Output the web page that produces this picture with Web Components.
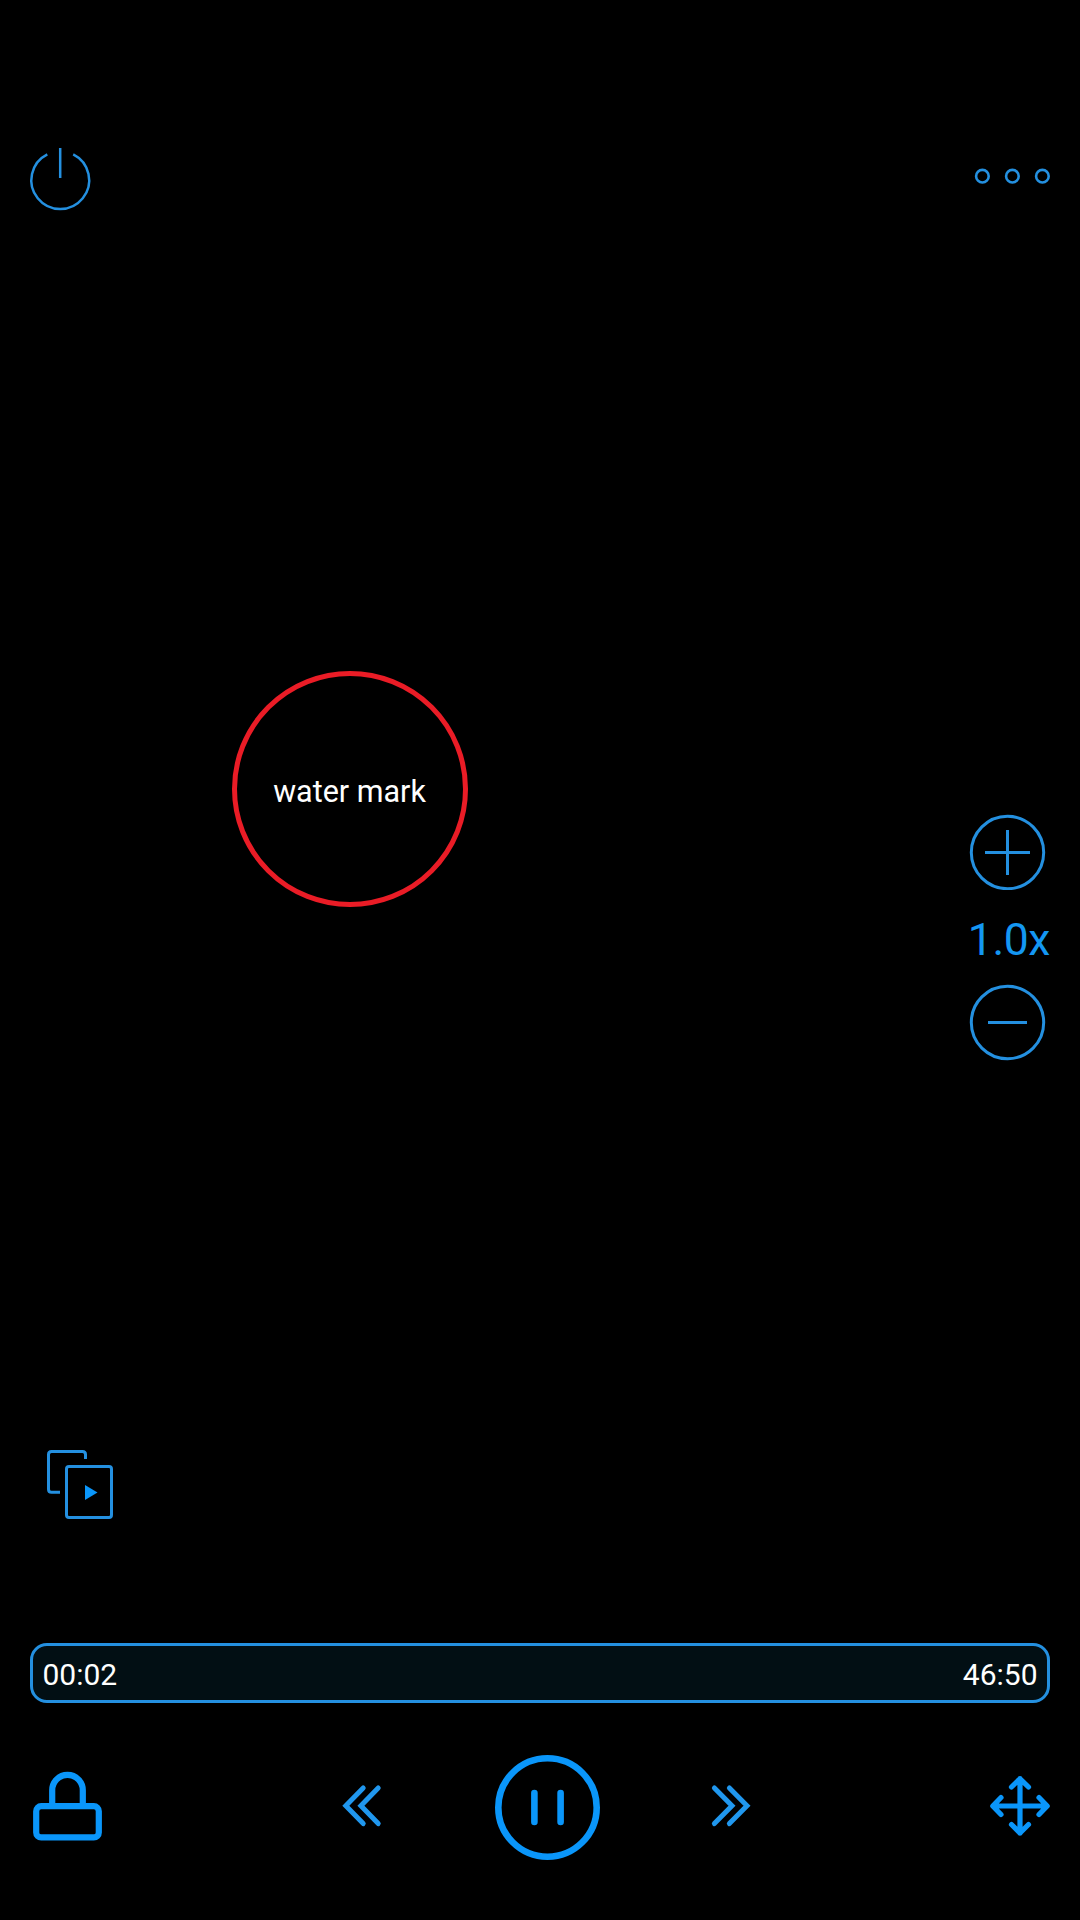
<!DOCTYPE html>
<html lang="en">
<head>
<meta charset="utf-8">
<title>Player</title>
<style>
html,body{margin:0;background:#000}
body{font-family:Roboto,"Noto Sans",sans-serif;color:#fff}
</style>
</head>
<body>
<player-screen></player-screen>
<script>
const define = (name, html) => customElements.define(name, class extends HTMLElement {
  constructor() {
    super();
    this.attachShadow({ mode: 'open' }).innerHTML = html;
  }
});

const ICONS = {
  power: [80, 80, 2.5, '<path d="M27.3 18.3A28.9 28.9 0 1 0 53.2 18.3M40.2 12V42"/>'],
  more: [100, 40, 2.6, '<circle cx="22.4" cy="20.2" r="6.3"/><circle cx="52.4" cy="20.2" r="6.3"/><circle cx="82.4" cy="20.2" r="6.3"/>'],
  plus: [110, 90, 3, '<circle cx="52.5" cy="52.5" r="36.2"/><path d="M30 52.5H75M52.5 30V75"/>'],
  minus: [110, 90, 3, '<circle cx="52.5" cy="42.5" r="36.2"/><path d="M33 42.5H72"/>'],
  playlist: [90, 90, 3, '<path d="M24 52.3H15.5Q12.5 52.3 12.5 49.3V14.5Q12.5 11.5 15.5 11.5H46.5Q49.5 11.5 49.5 14.5V19"/><rect x="30.5" y="26.5" width="45" height="51" rx="2.5"/><path d="M49 45L61.5 52.5L49 60Z" fill="#0a96fa" stroke="none"/>'],
  lock: [100, 90, 6.2, '<rect x="16.2" y="46.2" width="62.6" height="31.2" rx="5"/><path d="M32.2 46V30.2A15.3 15.3 0 0 1 62.8 30.2V46"/>'],
  rewind: [70, 70, 5, '<path stroke-linecap="round" d="M33.2 18L15.8 35.8L33.2 53.6M48.2 18L30.9 35.8L48.2 53.6"/>'],
  forward: [70, 70, 5, '<path stroke-linecap="round" d="M14.4 18L32 35.8L14.4 53.6M29.4 18L47 35.8L29.4 53.6"/>'],
  pause: [125, 125, 6.6, '<circle cx="62.5" cy="62.5" r="49.2"/><path stroke-linecap="round" d="M49.4 48V77M75.6 48V77"/>'],
  move: [90, 90, 5.2, '<path stroke-linecap="round" stroke-linejoin="round" d="M45 18.5V73M18 46H72M36.5 27L45 18.8L53.5 27M36.5 64.5L45 73L53.5 64.5M26 37.5L17.8 46L26 54.5M64 37.5L72.2 46L64 54.5"/>']
};

customElements.define('line-icon', class extends HTMLElement {
  connectedCallback() {
    const [w, h, stroke, shapes] = ICONS[this.getAttribute('name')];
    this.attachShadow({ mode: 'open' }).innerHTML = `
      <style>:host{display:block;flex:none}svg{display:block}</style>
      <svg width="${w}" height="${h}" viewBox="0 0 ${w} ${h}" fill="none"
        stroke="var(--tint,#2490e0)" stroke-width="${stroke}">${shapes}</svg>`;
  }
});

define('water-mark', `
  <style>
    :host{box-sizing:border-box;display:flex;align-items:center;justify-content:center;
      width:236px;height:236px;border:5px solid #ea1c26;border-radius:50%;
      font-size:30.5px;line-height:36px;padding:6px 1px 0 0;white-space:nowrap}
  </style><slot></slot>`);

define('speed-control', `
  <style>
    :host{display:flex;flex-direction:column;width:110px}
    .value{box-sizing:border-box;height:90px;padding-right:15px;line-height:101px;
      font-size:44.5px;letter-spacing:-.4px;text-align:right;color:#1497f2}
  </style>
  <line-icon name="plus"></line-icon>
  <div class="value"><slot></slot></div>
  <line-icon name="minus"></line-icon>`);

define('time-bar', `
  <style>
    :host{box-sizing:border-box;display:flex;justify-content:space-between;align-items:center;
      height:60px;border:3px solid #2490e0;border-radius:17px;background:#020f14;
      padding:3px 9.5px 0;font-size:30px;line-height:36px}
  </style>
  <slot name="elapsed"></slot><slot name="total"></slot>`);

define('player-controls', `
  <style>
    :host{display:grid;grid-template-columns:310px 155px 215px 275px 90px;
      height:125px;--tint:#0a96fa}
    line-icon{margin-top:15px}
    .rewind,.forward{margin-top:25px;--tint:#2097ee}
    .pause{margin-top:0}
  </style>
  <line-icon name="lock"></line-icon>
  <line-icon class="rewind" name="rewind"></line-icon>
  <line-icon class="pause" name="pause"></line-icon>
  <line-icon class="forward" name="forward"></line-icon>
  <line-icon name="move"></line-icon>`);

define('player-screen', `
  <style>
    :host{box-sizing:border-box;display:flex;flex-direction:column;
      width:1080px;height:1920px;padding-top:136px;background:#000;overflow:hidden}
    header{display:flex;justify-content:space-between;height:80px;padding:0 20px}
    header line-icon + line-icon{margin-top:20px}
    main{display:flex;justify-content:space-between;align-items:flex-start;
      height:1224px;padding:0 15px 0 232px}
    water-mark{margin-top:455px}
    speed-control{margin-top:584px}
    .playlist{margin-left:36px}
    time-bar{margin:113px 30px 42px}
    player-controls{margin-left:20px}
  </style>
  <header>
    <line-icon name="power"></line-icon>
    <line-icon name="more"></line-icon>
  </header>
  <main>
    <water-mark>water mark</water-mark>
    <speed-control>1.0x</speed-control>
  </main>
  <line-icon class="playlist" name="playlist"></line-icon>
  <time-bar><span slot="elapsed">00:02</span><span slot="total">46:50</span></time-bar>
  <player-controls></player-controls>`);
</script>
</body>
</html>
